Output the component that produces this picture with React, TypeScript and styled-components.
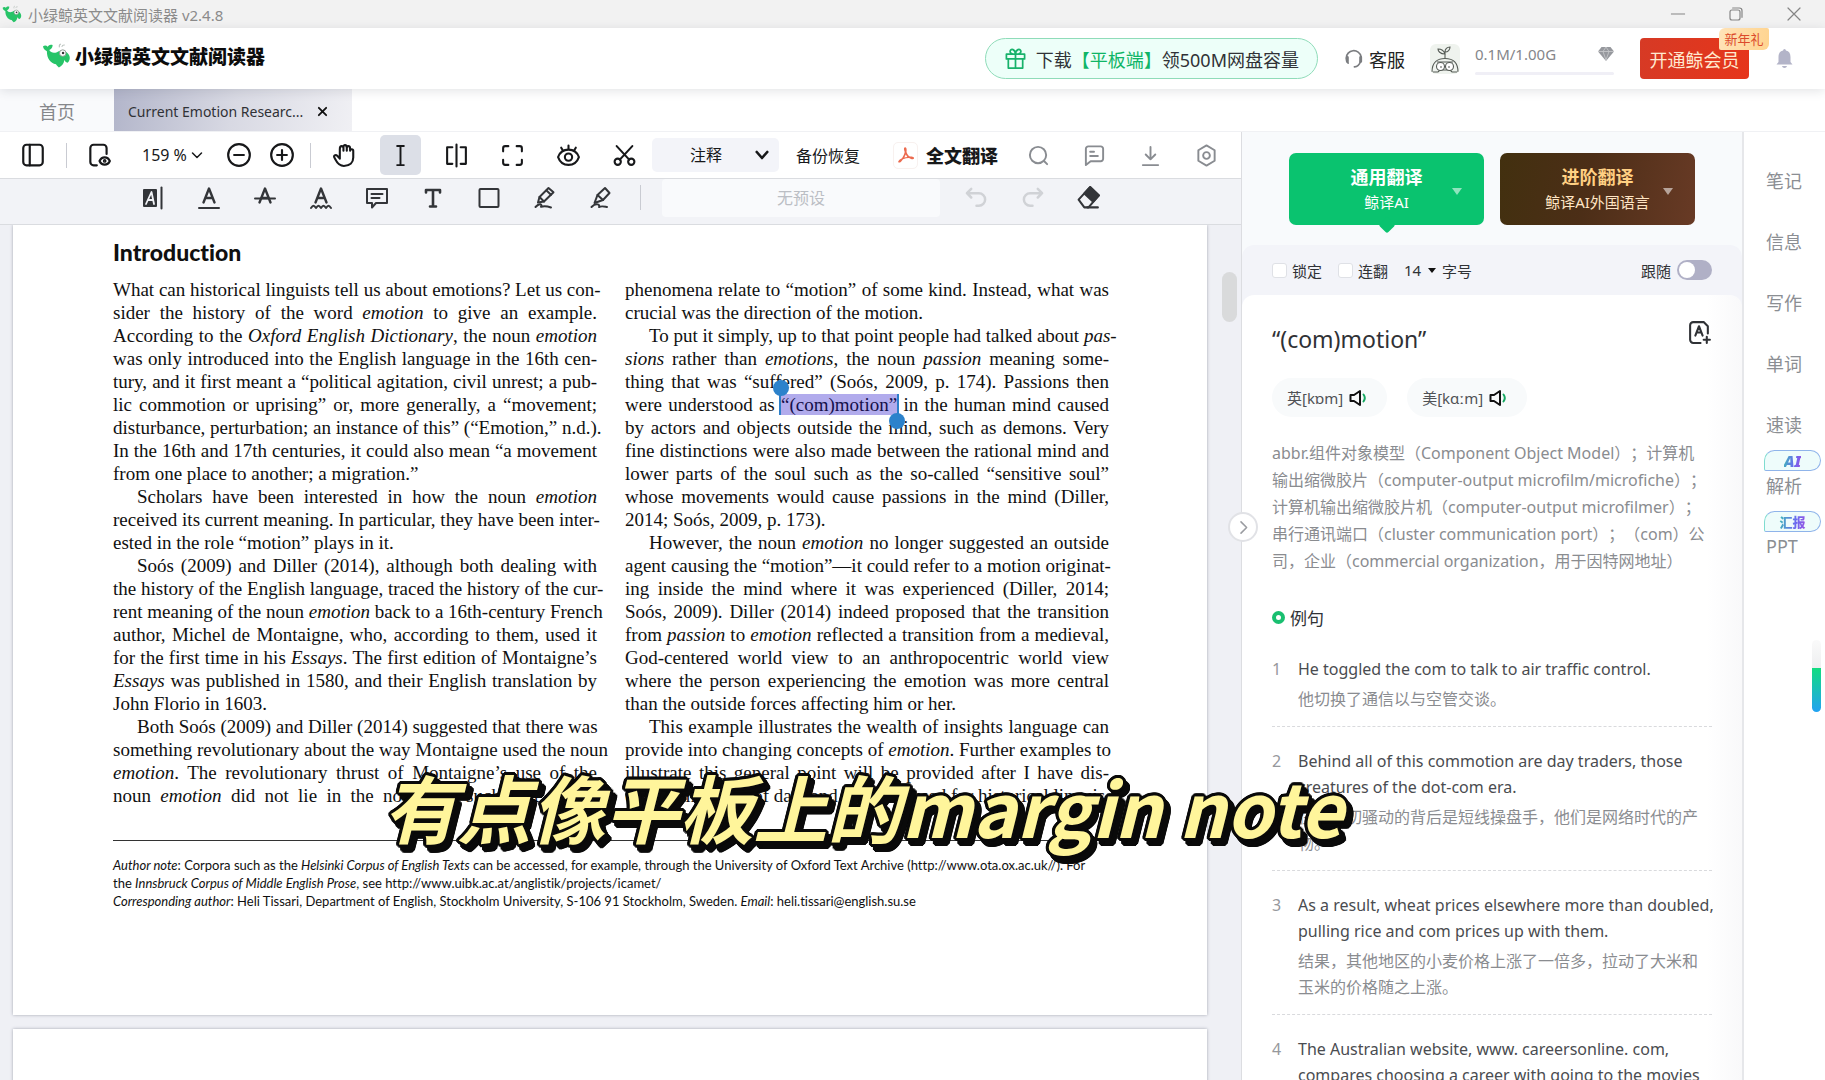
import React, { useState } from "react";
import styled, { createGlobalStyle, css } from "styled-components";

const ui = `"Noto Sans", "Noto Sans CJK SC", sans-serif`;

const GlobalStyle = createGlobalStyle`
  *, *::before, *::after { box-sizing: border-box; }
  html, body { margin: 0; padding: 0; }
  body { font-family: ${ui}; color: #303236; background: #fff; overflow: hidden; text-spacing-trim: space-all; }
  button, input, select { font: inherit; color: inherit; margin: 0; }
  button { border: 0; padding: 0; background: none; cursor: pointer; }
  p, h1, h2, h3, ol, ul { margin: 0; padding: 0; font-weight: inherit; }
  ol, ul { list-style: none; }
  svg { display: block; flex: none; }
`;

/* ---------- icons ---------- */

type IconProps = { size?: number; w?: number; color?: string; children: React.ReactNode };
const Icon = ({ size = 26, w = 2, color = "currentColor", children }: IconProps) => (
  <svg width={size} height={size} viewBox="0 0 24 24" fill="none" stroke={color} strokeWidth={w} strokeLinecap="round" strokeLinejoin="round" aria-hidden="true">
    {children}
  </svg>
);

const Whale = ({ width, height }: { width: number; height: number }) => (
  <svg width={width} height={height} viewBox="0 0 30 26" aria-hidden="true">
    <path d="M1 3.500C2.500 2 4.500 2.200 5.800 3.800 7 1.800 9 1.200 11 2.200 10.800 5.200 9.500 6.500 7.500 7.300 9 10 12 11 15.500 9.500 18.500 7.500 22.500 7 25.500 9.500 29.500 12.500 30 17.500 26.500 20.500 24.500 20 23.500 19 23 17.500 23 21 21 24 17.500 25.500 16 24 15 23 14.500 22 8.500 21 5 16 5 8.500 2.800 7.800 1.200 6 1 3.500Z" fill="#27c468" />
    <circle cx="21.500" cy="10.500" r="3.400" fill="#fff" stroke="#8f9a94" strokeWidth="1" />
    <circle cx="21.800" cy="10.500" r="1.300" fill="#333" />
    <path d="M18 4.500C17.500 2.500 18 1.500 19.500 1M20.500 4C21 2.500 22 2 23.500 2.200" stroke="#b9c1bd" strokeWidth="1.100" fill="none" />
  </svg>
);

const LetterA = () => <path d="M6.500 16.500 12 2.500l5.500 14M8.400 12h7.200" strokeWidth="2.400" />;

const icons = {
  sidebar: <><rect x="3" y="2.500" width="18" height="19" rx="3" /><path d="M9 2.500v19" /></>,
  pageEye: <><path d="M10 21.500H7a3 3 0 0 1-3-3v-13a3 3 0 0 1 3-3h9a3 3 0 0 1 3 3V11" /><path d="M12.500 17.500c2-4.500 7.500-4.500 9.500 0-2 4.500-7.500 4.500-9.500 0Z" /><circle cx="17.250" cy="17.500" r=".7" /></>,
  minus: <><circle cx="12" cy="12" r="10" /><path d="M7.500 12h9" /></>,
  plus: <><circle cx="12" cy="12" r="10" /><path d="M7.500 12h9M12 7.500v9" /></>,
  hand: <path d="M7.500 15 5 12.200c-1.600-1.600-3.800.2-2.600 2 1.800 3 3 7.800 9 7.800 6 0 9-3.500 9-8V7.500c0-2-3-2-3 0 0-3.500 0-4.500-1.600-4.500S14.200 4 14.200 5c0-2-.2-3-1.700-3S11 3 11 5c0-1.300-.3-2-1.700-2S7.500 4 7.500 6v9M17.400 7.500V6M14.200 5v2.500M11 5v2.500" />,
  ibeam: <path d="M8.500 2h7M12 2v20M8.500 22h7" />,
  split: <path d="M12 1.500v21M8 4H3v16h5M16 4h5v16h-5" />,
  expand: <path d="M3 8V5a2 2 0 0 1 2-2h3M16 3h3a2 2 0 0 1 2 2v3M21 16v3a2 2 0 0 1-2 2h-3M8 21H5a2 2 0 0 1-2-2v-3" />,
  eye: <><path d="M2 13.500c3.500-9.500 16.500-9.500 20 0-3.500 10-16.500 10-20 0Z" /><circle cx="12" cy="13.500" r="3.500" /><path d="M12 5.500V2.500M6.500 7 5 4.500M17.500 7 19 4.500" /></>,
  scissors: <><circle cx="5.500" cy="18" r="3" /><circle cx="18.500" cy="18" r="3" /><path d="M4.500 3 16.500 16M19.500 3 7.500 16" /></>,
  search: <><circle cx="11.500" cy="11.500" r="8.500" /><path d="m18 18 3 3" /></>,
  comment: <><path d="M3 22V5a2.500 2.500 0 0 1 2.500-2.500h13A2.500 2.500 0 0 1 21 5v10.500a2.500 2.500 0 0 1-2.500 2.500H8Z" /><path d="M7.500 8h4M7.500 12.500h8" /></>,
  download: <path d="M12 3v13M7 11l5 5 5-5M4 22h16" />,
  hex: <><path d="M12 1.500 20.500 6.500v11L12 22.500 3.500 17.500v-11Z" /><circle cx="12" cy="12" r="3.500" /></>,
  highlight: <><rect x="2" y="3" width="14" height="18" rx="1" fill="currentColor" stroke="none" /><path d="M5 18 10.500 6l2.500 12M7 14h5" stroke="#f2f3f7" strokeWidth="1.800" /><path d="M20.500 1.500v21" /></>,
  underline: <><LetterA /><path d="M2 22h20" /></>,
  strike: <><LetterA /><path d="M2 12.500h20" /></>,
  wavy: <><LetterA /><path d="M2 22c2-3 3-3 5 0 2-3 3-3 5 0 2-3 3-3 5 0 2-3 3-3 5 0" /></>,
  note: <><path d="M2 3h20v14H11l-4 4.500V17H2Z" /><path d="M6.500 8h11M6.500 12h8" /></>,
  text: <path d="M5 6.500V4h14v2.500M12 4v16M9 20.500h6" strokeWidth="2.600" />,
  square: <rect x="2.500" y="3" width="19" height="18" rx="1" />,
  pen: <><path d="m5 16.500 1.500-5.500L15.500 2l5 4.200L11 15.500Z" /><path d="m13.500 4.500 4.500 4.200M6.500 11l4.500 4.500M2.500 21c4-4.500 7-3 5.500-.2C10 20 14 20 18 21.500" /></>,
  marker: <><path d="m5.500 17 3-8L16 2l4.500 5L14 14Z" /><path d="m8.500 9 5.500 5M2.500 21c5-5 9-2 7.500 0 3-1.500 7 0 8 0" /></>,
  undo: <path d="M6.500 3 2 7.500 6.500 12M3 7.500h11.500a6.500 6.500 0 0 1 0 13H12" strokeWidth="2.600" />,
  redo: <path d="M17.500 3 22 7.500 17.500 12M21 7.500H9.500a6.500 6.500 0 0 0 0 13H12" strokeWidth="2.600" />,
  eraser: <><path d="m2.500 14 11-12 8.500 8-10 11.500H8Z" /><path d="m13.500 2 8.500 8-5.500 6L8 8.200Z" fill="currentColor" /><path d="M11 21.500h10" /></>,
};

/* ---------- window frame and header ---------- */

const Shell = styled.div`display: flex; flex-direction: column; height: 100vh; min-width: 1500px; overflow: hidden; position: relative;`;

const TitleBar = styled.div`
  display: flex; align-items: center; flex: none; height: 28px; padding: 0 23px 0 2px;
  background: #f2f2f2; color: #8b8b8b; font-size: 15px; gap: 6px;
`;
const WindowButtons = styled.div`display: flex; margin-left: auto; gap: 42px; color: #858585;`;

const Header = styled.header`
  display: flex; align-items: center; flex: none; height: 61px; padding: 0 32px 0 42px;
  background: #fff; box-shadow: 0 2px 10px rgba(60, 64, 80, 0.14); position: relative; z-index: 2;
`;
const Brand = styled.h1`display: flex; align-items: center; gap: 4px; margin-right: auto; padding-bottom: 6px; font-size: 19px; font-weight: 900; color: #0c0c0c;`;
const Promo = styled.button`
  display: flex; align-items: center; gap: 9px; height: 41px; padding: 0 18px; margin-right: 26px;
  border: 1px solid #8fdcb9; border-radius: 21px; background: #edfff9; font-size: 18px; color: #303236; white-space: nowrap;
  em { font-style: normal; color: #10b566; }
`;
const Service = styled.a`
  display: flex; align-items: center; gap: 5px; margin-right: 25px; font-size: 18px; color: #222; text-decoration: none;
  svg { color: #7b7d80; }
`;
const Avatar = styled.div`width: 30px; height: 30px; margin-right: 15px; border-radius: 6px; background: #eff3ee; overflow: hidden;`;
const Storage = styled.div`width: 139px; margin-right: 26px; color: #85868a; font-size: 15px;`;
const StorageTop = styled.div`display: flex; align-items: center; justify-content: space-between; height: 24px;`;
const Meter = styled.div`height: 3px; margin-top: 6px; border-radius: 2px; background: #f0eff6;`;
const Vip = styled.button`
  position: relative; width: 109px; height: 41px; margin-right: 27px; border-radius: 4px;
  background: linear-gradient(100deg, #d63a25, #e6351b); color: #ffe9d0; font-size: 18px; white-space: nowrap;
`;
const VipBadge = styled.span`
  position: absolute; right: -20px; top: -10px; width: 50px; height: 22px; line-height: 22px; font-size: 13px;
  border-radius: 6px 2px 6px 2px; background: linear-gradient(100deg, #ffe3b8, #ffd48f); color: #dc4a2b;
`;

const Tabs = styled.nav`display: flex; flex: none; height: 43px; border-bottom: 1px solid #f0f1f4; background: #fff;`;
const HomeTab = styled.button`width: 114px; padding-top: 2px; background: #f9fafc; color: #85878b; font-size: 18px;`;
const DocTab = styled.div`
  display: flex; align-items: center; gap: 14px; width: 238px; padding: 3px 0 0 14px;
  background: linear-gradient(100deg, #b2b5ca, #d8d9e3 50%, #f0f0f4); font-size: 14px; white-space: nowrap;
`;

/* ---------- reader ---------- */

const Body = styled.div`display: flex; flex: 1; min-height: 0;`;
const Reader = styled.main`display: flex; flex-direction: column; flex: 1; min-width: 0; position: relative;`;
const Toolbar = styled.div<{ $tone?: "grey" }>`
  display: flex; align-items: center; flex: none; border-bottom: 1px solid #dadce0;
  ${(p) => p.$tone === "grey"
    ? css`height: 46px; padding: 0 0 8px 125px; background: #f2f3f7; color: #333539;`
    : css`height: 47px; padding-left: 5px; background: #fff; color: #17181a;`}
`;
const Tool = styled.button<{ $w?: number; $muted?: boolean; $faint?: boolean }>`
  display: grid; place-items: center; flex: none; width: ${(p) => p.$w ?? 56}px; height: 40px;
  ${(p) => p.$muted && css`color: #898c91;`}
  ${(p) => p.$faint && css`color: #d0d2d6;`}
`;
const Pressed = styled.span`display: grid; place-items: center; width: 41px; height: 40px; border-radius: 5px; background: #dcdfe7;`;
const Divider = styled.i<{ $l?: number; $r?: number }>`flex: none; width: 1px; height: 25px; margin: 0 ${(p) => p.$r ?? 5}px 0 ${(p) => p.$l ?? 5}px; background: #c9cbd2;`;
const Picker = styled.label<{ $box?: boolean }>`
  display: flex; align-items: center; flex: none;
  select { appearance: none; border: 0; background: none; outline: 0; padding: 0; }
  ${(p) => p.$box
    ? css`width: 127px; height: 34px; padding: 0 8px 0 38px; border-radius: 5px; background: #f3f4f9; font-size: 16px; justify-content: space-between;`
    : css`width: 61px; margin: 0 14px 0 15px; font-size: 16px; justify-content: space-between;`}
`;
const TextButton = styled.button<{ $bold?: boolean }>`
  display: flex; align-items: center; flex: none; gap: 8px; white-space: nowrap; font-size: 16px;
  ${(p) => p.$bold ? css`margin: 0 12px 0 33px; font-size: 18px; font-weight: 900;` : css`margin-left: 17px;`}
`;
const PdfBadge = styled.span`display: grid; place-items: center; width: 25px; height: 27px; border-radius: 5px; border: 1px solid #f8f1ef;`;
const Preset = styled.input`
  width: 278px; height: 38px; margin-right: 8px; border: 0; border-radius: 4px; background: #f9fafc;
  text-align: center; font-size: 16px; &::placeholder { color: #bbbec4; opacity: 1; }
`;

const Canvas = styled.div`display: flex; flex: 1; min-height: 0; background: #eff0f5; padding-left: 13px; overflow: hidden;`;
const Pages = styled.div`display: flex; flex-direction: column; gap: 14px; flex: 1; min-width: 0;`;
const Page = styled.article`
  flex: none; min-height: 200px; padding: 12px 98px 105px 100px; background: #fff;
  box-shadow: 0 0 3px rgba(70, 75, 95, 0.45); color: #101010;
`;
const Track = styled.div`width: 34px; padding: 47px 4px 0 15px;`;
const Thumb = styled.div`height: 50px; border-radius: 8px; background: #d9dadb;`;
const SectionTitle = styled.h2`height: 30px; margin-bottom: 11px; font: 900 23px/30px Lato, sans-serif; font-variant-ligatures: none;`;
const Columns = styled.div`display: grid; grid-template-columns: repeat(2, minmax(0, 1fr)); gap: 28px; font: 19px/23px "Liberation Serif", serif;`;
const Line = styled.span<{ $last?: boolean }>`
  display: block; white-space: nowrap; text-align: justify; text-align-last: ${(p) => (p.$last ? "left" : "justify")};
`;
const Para = styled.p<{ $indent?: boolean }>`${(p) => p.$indent && css`& > span:first-child { padding-left: 24px; }`}`;
const Footnote = styled.footer`margin-top: 33px; padding-top: 15px; border-top: 1px solid #333; font: 13px/18px Lato, sans-serif; font-variant-ligatures: none; white-space: nowrap;`;

const Selection = styled.mark`
  position: relative; display: inline-block; height: 21px; line-height: 21px; background: #b1abec; color: #15104a; box-shadow: -2px 0 0 #2d7fc9, 2px 0 0 #2d7fc9;
  &::before, &::after { content: ""; position: absolute; width: 16px; height: 16px; border-radius: 50%; background: #2c82cb; }
  &::before { left: -8px; top: -14px; }
  &::after { right: -8px; bottom: -14px; }
`;
const Collapse = styled.button`
  position: absolute; right: -17px; top: 380px; z-index: 3; display: grid; place-items: center;
  width: 30px; height: 30px; border-radius: 50%; border: 2px solid #e1e2e6; background: #fff; color: #9a9ca1;
`;

/* ---------- translation panel ---------- */

const Panel = styled.aside`
  display: flex; flex-direction: column; flex: none; width: 503px; background: #f8fafc;
  border-left: 1px solid #dcdde1; border-right: 2px solid #e6e7ea;
`;
const Engines = styled.div`display: flex; gap: 16px; flex: none; height: 113px; padding: 21px 47px 0;`;
const Engine = styled.button<{ $gold?: boolean }>`
  position: relative; width: 195px; height: 72px; border-radius: 7px; text-align: center; font-size: 15px; line-height: 24px;
  background: ${(p) => (p.$gold ? "linear-gradient(100deg, #42300f, #4c2e17 45%, #683a25)" : "#0ac36f")};
  color: ${(p) => (p.$gold ? "#ffe5c4" : "#fff")};
  strong { display: block; font-size: 18px; line-height: 26px; font-weight: 700; color: ${(p) => (p.$gold ? "#ffd083" : "#fff")}; }
  ${(p) => !p.$gold && css`&::before { content: ""; position: absolute; left: 50%; bottom: -6px; width: 12px; height: 12px; margin-left: -6px; background: #0ac36f; transform: rotate(45deg); border-radius: 2px; }`}
`;
const EngineArrow = styled.i`position: absolute; right: 22px; top: 35px; border: 5px solid transparent; border-top: 7px solid rgba(255, 255, 255, 0.55); border-bottom: 0;`;
const Options = styled.div`
  display: flex; align-items: center; flex: none; height: 62px; margin-bottom: -12px; padding: 0 30px 12px; border-radius: 12px 12px 0 0;
  background: #f3f4f9; font-size: 15px;
`;
const Check = styled.label`
  display: flex; align-items: center; gap: 5px; margin-right: 16px;
  input { appearance: none; width: 15px; height: 15px; border: 1px solid #dfe1e6; border-radius: 3px; background: #fff; }
`;
const SizePick = styled.label`
  display: flex; align-items: center; gap: 6px;
  select { appearance: none; border: 0; background: none; outline: 0; padding: 0; width: 18px; }
  i { border: 4px solid transparent; border-top: 5px solid #111; border-bottom: 0; }
`;
const Follow = styled.label`
  display: flex; align-items: center; gap: 6px; margin-left: auto;
  input { appearance: none; width: 35px; height: 20px; padding: 2px; border-radius: 10px; background: #b0b0c6; }
  input::before { content: ""; display: block; width: 16px; height: 16px; border-radius: 50%; background: #fff; }
`;
const Sheet = styled.section`
  flex: 1; min-height: 0; padding: 25px 30px 0; border-radius: 12px 12px 0 0; overflow: hidden;
  background: linear-gradient(90deg, #fff 93%, #f9f9fa);
`;
const WordRow = styled.div`display: flex; justify-content: space-between; align-items: flex-start; height: 58px;`;
const Word = styled.h2`font-size: 23px; line-height: 38px; color: #2f3135;`;
const Chips = styled.div`display: flex; gap: 20px;`;
const Chip = styled.button`display: flex; align-items: center; gap: 6px; height: 39px; padding: 0 18px 0 15px; border-radius: 20px; background: #f8fafb; font-size: 15px; color: #505256;`;
const Definition = styled.p`margin-top: 23px; font-size: 16px; line-height: 27px; color: #8a8c90; white-space: nowrap; span { display: block; }`;
const Subhead = styled.h3`
  display: flex; align-items: center; gap: 5px; height: 36px; margin-top: 24px; font-size: 17px;
  &::before { content: ""; width: 13px; height: 13px; border-radius: 50%; border: 4px solid #19bf70; }
`;
const Example = styled.li`
  display: grid; grid-template-columns: 26px 1fr; padding: 21px 0 14px; border-bottom: 1px dashed #d9dadd; font-size: 16px; line-height: 26px; color: #4a4c50; white-space: nowrap;
  & > span { color: #96989c; }
  p { white-space: pre; }
  p + p { margin-top: 4px; color: #8a8c90; }
`;

const Rail = styled.nav`flex: none; width: 81px; padding-top: 17px; background: #fff; position: relative;`;
const RailLink = styled.a`
  position: relative; display: flex; align-items: center; height: 61px; padding-left: 22px; font-size: 18px; color: #8b8e93; text-decoration: none;
`;
const RailBadge = styled.span<{ $small?: boolean }>`
  position: absolute; left: 20px; top: -4px; width: 57px; height: 21px; border: 1px solid #8fb4ea; border-left-color: #7fdcd0; border-radius: 11px 11px 11px 2px;
  background: #eefcfb; display: grid; place-items: center; line-height: 18px;
  b { background: linear-gradient(100deg, #3bbcb4, #6a6cf0 60%, #9b4fe0); background-clip: text; color: transparent; font-weight: 900; font-size: ${(p) => (p.$small ? 13 : 16)}px; font-style: ${(p) => (p.$small ? "normal" : "italic")}; }
`;
const RailScroll = styled.div`position: absolute; right: 4px; bottom: 368px; width: 9px; height: 72px; background: linear-gradient(#fafafa, #eeeff0 28px, #12dc80 28px, #22a2f2); border-radius: 5px;`;

const ring = Array.from({ length: 16 }, (_, i) => {
  const a = (i / 16) * Math.PI * 2;
  return `${Math.round(Math.cos(a) * 3)}px ${Math.round(Math.sin(a) * 3)}px 0 #0a0a0a`;
});
const drop = Array.from({ length: 16 }, (_, i) => {
  const a = (i / 16) * Math.PI * 2;
  return `${Math.round(Math.cos(a) * 3) + 4}px ${Math.round(Math.sin(a) * 3) + 5}px 0 #0a0a0a`;
});
const Caption = styled.div`
  position: absolute; z-index: 5; left: 21%; top: 751px; white-space: nowrap; pointer-events: none;
  font: italic 700 74px/110px "Noto Sans CJK SC", sans-serif; color: #fff59b;
  text-shadow: ${[...ring, ...drop].join(", ")};
`;

/* ---------- content ---------- */

const left: string[][] = [
  ["What can historical linguists tell us about emotions? Let us con-", "sider the history of the word *emotion* to give an example.", "According to the *Oxford English Dictionary*, the noun *emotion*", "was only introduced into the English language in the 16th cen-", "tury, and it first meant a “political agitation, civil unrest; a pub-", "lic commotion or uprising” or, more generally, a “movement;", "disturbance, perturbation; an instance of this” (“Emotion,” n.d.).", "In the 16th and 17th centuries, it could also mean “a movement", "from one place to another; a migration.”"],
  ["Scholars have been interested in how the noun *emotion*", "received its current meaning. In particular, they have been inter-", "ested in the role “motion” plays in it."],
  ["Soós (2009) and Diller (2014), although both dealing with", "the history of the English language, traced the history of the cur-", "rent meaning of the noun *emotion* back to a 16th-century French", "author, Michel de Montaigne, who, according to them, used it", "for the first time in his *Essays*. The first edition of Montaigne’s", "*Essays* was published in 1580, and their English translation by", "John Florio in 1603."],
  ["Both Soós (2009) and Diller (2014) suggested that there was", "something revolutionary about the way Montaigne used the noun", "*emotion*. The revolutionary thrust of Montaigne’s use of the", "noun *emotion* did not lie in the notion as such, but not in|"],
];
const right: string[][] = [
  ["phenomena relate to “motion” of some kind. Instead, what was", "crucial was the direction of the motion."],
  ["To put it simply, up to that point people had talked about *pas-*", "*sions* rather than *emotions*, the noun *passion* meaning some-", "thing that was “suffered” (Soós, 2009, p. 174). Passions then", "were understood as #“(com)motion”# in the human mind caused", "by actors and objects outside the mind, such as demons. Very", "fine distinctions were also made between the rational mind and", "lower parts of the soul such as the so-called “sensitive soul”", "whose movements would cause passions in the mind (Diller,", "2014; Soós, 2009, p. 173)."],
  ["However, the noun *emotion* no longer suggested an outside", "agent causing the “motion”—it could refer to a motion originat-", "ing inside the mind where it was experienced (Diller, 2014;", "Soós, 2009). Diller (2014) indeed proposed that the transition", "from *passion* to *emotion* reflected a transition from a medieval,", "God-centered world view to an anthropocentric world view", "where the person experiencing the emotion was more central", "than the outside forces affecting him or her."],
  ["This example illustrates the wealth of insights language can", "provide into changing concepts of *emotion*. Further examples to", "illustrate this general point will be provided after I have dis-", "cussed the types of data and methods used for historical linguis-|"],
];

const rich = (s: string) =>
  s.split(/(\*[^*]+\*|#[^#]+#)/).map((part, i) =>
    part[0] === "*" ? <em key={i}>{part.slice(1, -1)}</em> : part[0] === "#" ? <Selection key={i}>{part.slice(1, -1)}</Selection> : part
  );

const Column = ({ paras }: { paras: string[][] }) => (
  <div>
    {paras.map((lines, p) => (
      <Para key={p} $indent={p > 0}>
        {lines.map((l, i) => (
          <Line key={i} $last={i === lines.length - 1 && !l.endsWith("|")}>{rich(l.replace("|", ""))}</Line>
        ))}
      </Para>
    ))}
  </div>
);

const examples = [
  ["He toggled the com to talk to air traffic control.", "他切换了通信以与空管交谈。"],
  ["Behind all of this commotion are day traders, those\ncreatures of the dot-com era.", "在这一切骚动的背后是短线操盘手，他们是网络时代的产\n物。"],
  ["As a result, wheat prices elsewhere more than doubled,\npulling rice and com prices up with them.", "结果，其他地区的小麦价格上涨了一倍多，拉动了大米和\n玉米的价格随之上涨。"],
  ["The Australian website, www. careersonline. com,\ncompares choosing a career with going to the movies", ""],
];

const definition = [
  "abbr.组件对象模型（Component Object Model）；计算机",
  "输出缩微胶片（computer-output microfilm/microfiche）；",
  "计算机输出缩微胶片机（computer-output microfilmer）；",
  "串行通讯端口（cluster communication port）；（com）公",
  "司，企业（commercial organization，用于因特网地址）",
];

const Speaker = () => (
  <svg width="20" height="18" viewBox="0 0 20 18" fill="none" strokeWidth="2" aria-hidden="true">
    <path d="M1.500 6H5l6-4v14l-6-4H1.500Z" stroke="#111" strokeLinejoin="round" />
    <path d="M14.500 5.500c1.500 2 1.500 5 0 7" stroke="#17a862" strokeLinecap="round" />
  </svg>
);

const mainTools: [string, keyof typeof icons][] = [["双页", "split"], ["全屏", "expand"], ["护眼", "eye"], ["截图", "scissors"]];
const sideTools: [string, keyof typeof icons][] = [["搜索", "search"], ["评论", "comment"], ["下载", "download"], ["设置", "hex"]];
const noteTools: [string, keyof typeof icons][] = [["高亮", "highlight"], ["下划线", "underline"], ["删除线", "strike"], ["波浪线", "wavy"], ["批注", "note"], ["文本", "text"], ["矩形", "square"], ["画笔", "pen"], ["荧光笔", "marker"]];

export default function App() {
  const [follow, setFollow] = useState(false);
  return (
    <Shell>
      <GlobalStyle />
      <TitleBar>
        <Whale width={20} height={18} />
        <span>小绿鲸英文文献阅读器 v2.4.8</span>
        <WindowButtons>
          <button aria-label="最小化"><Icon size={16} w={1.500}><path d="M2 12h20" /></Icon></button>
          <button aria-label="还原"><Icon size={16} w={1.800}><rect x="3" y="6" width="15" height="15" rx="3" /><path d="M7 3h10a4 4 0 0 1 4 4v10" /></Icon></button>
          <button aria-label="关闭"><Icon size={16} w={1.800}><path d="m3 3 18 18M21 3 3 21" /></Icon></button>
        </WindowButtons>
      </TitleBar>

      <Header>
        <Brand><Whale width={29} height={25} />小绿鲸英文文献阅读器</Brand>
        <Promo>
          <Icon size={23} w={1.800} color="#18b26b"><path d="M2.500 7.500h19v5h-19ZM4.500 12.500h15V22h-15ZM12 7.500V22M12 7.500C7 7.500 6 5.500 6.500 4c.8-2.500 5-2 5.500 3.500C12.500 2 16.700 1.500 17.500 4c.5 1.500-.5 3.500-5.500 3.500" /></Icon>
          <span>下载<em>【平板端】</em>领500M网盘容量</span>
        </Promo>
        <Service href="#service">
          <Icon size={20} w={2}><path d="M5 17a9 9 0 1 1 14.500-1.500C18.500 19 16 21 12.500 21.500" /><path d="M4 10v5M20 10v5" strokeWidth="3.500" /></Icon>客服
        </Service>
        <Avatar>
          <svg width="30" height="30" viewBox="0 0 30 30" fill="none" stroke="#555b55" strokeWidth="1.100">
            <path d="M15 14V8M15 10C10 10 8 7 8 5c4 0 6 2 7 5ZM15 8c0-3 2-5 5-5 0 3-2 5-5 5Z" />
            <path d="M2 28C2 18 8 14.500 15 14.500S28 18 28 28M7 18h16M3 28h5l2-2h10l2 2h5" />
            <circle cx="10.500" cy="22.500" r="4" fill="#fff" /><circle cx="19.500" cy="22.500" r="4" fill="#fff" /><path d="M10 23h2M18 23h2" />
          </svg>
        </Avatar>
        <Storage>
          <StorageTop><span>0.1M/1.00G</span>
            <svg width="16" height="14" viewBox="0 0 16 14" fill="#96989d"><path d="M3.500 0h9L16 4.500 8 14 0 4.500Z" /><path d="M0 4.500h16M5 4.500 8 13l3-8.500L8 0Z" stroke="#c9cacd" strokeWidth=".8" fill="none" /></svg>
          </StorageTop>
          <Meter />
        </Storage>
        <Vip>开通鲸会员<VipBadge>新年礼</VipBadge></Vip>
        <button aria-label="通知"><svg width="17" height="20" viewBox="0 0 17 20" fill="#b3b4c8"><path d="M8.500 0a1.500 1.500 0 0 1 1.400 1.600C13 2.200 14.500 4.500 14.500 8v5l2 2.500H.5l2-2.500V8c0-3.500 1.500-5.800 4.600-6.400A1.500 1.500 0 0 1 8.500 0ZM6 17h5c-.5 2.600-4.500 2.600-5 0Z" /></svg></button>
      </Header>

      <Tabs>
        <HomeTab>首页</HomeTab>
        <DocTab>
          <span>Current Emotion Researc...</span>
          <button aria-label="关闭标签"><Icon size={11} w={4} color="#111"><path d="m4 4 16 16M20 4 4 20" /></Icon></button>
        </DocTab>
      </Tabs>

      <Body>
        <Reader>
          <Toolbar>
            <Tool aria-label="侧栏"><Icon>{icons.sidebar}</Icon></Tool>
            <Divider $r={4} />
            <Tool aria-label="阅读视图"><Icon>{icons.pageEye}</Icon></Tool>
            <Picker>
              <select aria-label="缩放" defaultValue="159"><option value="159">159 %</option></select>
              <Icon size={12} w={3}><path d="m3 8 9 9 9-9" /></Icon>
            </Picker>
            <Tool $w={43} aria-label="缩小"><Icon>{icons.minus}</Icon></Tool>
            <Tool $w={43} aria-label="放大"><Icon>{icons.plus}</Icon></Tool>
            <Divider $l={7} />
            <Tool aria-label="抓手"><Icon size={25}>{icons.hand}</Icon></Tool>
            <Tool aria-label="选择文本"><Pressed><Icon size={23}>{icons.ibeam}</Icon></Pressed></Tool>
            {mainTools.map(([label, k]) => <Tool key={k} aria-label={label}><Icon size={25}>{icons[k]}</Icon></Tool>)}
            <Picker $box>
              <select aria-label="工具" defaultValue="note"><option value="note">注释</option></select>
              <Icon size={18} w={3.500}><path d="m5 8 7 8 7-8" /></Icon>
            </Picker>
            <TextButton>备份恢复</TextButton>
            <TextButton $bold>
              <PdfBadge>
                <svg width="18" height="18" viewBox="0 0 18 18" fill="#ec6b4f" aria-hidden="true"><path fillRule="evenodd" d="M7.500 1.500c2-1 2.500 1.500 2 4.500 1 2.500 2 4 3.500 4.500 2.500 0 4.500.5 4 2-.5 1.300-2.500 1-5-.5-2 0-4 .5-6 1.200C4.500 15.500 3 17 1.500 16.500.5 15.500 2.500 13.500 5 12.300 6.500 9.800 7.300 8 7.700 6 7 4 6.500 2.200 7.500 1.500Zm1.300 7-1.500 3 3-.6Z" /></svg>
              </PdfBadge>全文翻译
            </TextButton>
            {sideTools.map(([label, k]) => <Tool key={k} $muted aria-label={label}><Icon size={23}>{icons[k]}</Icon></Tool>)}
          </Toolbar>
          <Toolbar $tone="grey">
            {noteTools.map(([label, k]) => <Tool key={k} aria-label={label}><Icon size={24}>{icons[k]}</Icon></Tool>)}
            <Divider $l={11} $r={21} />
            <Preset placeholder="无预设" aria-label="预设" />
            <Tool $faint aria-label="撤销"><Icon size={23}>{icons.undo}</Icon></Tool>
            <Tool $faint aria-label="重做"><Icon size={23}>{icons.redo}</Icon></Tool>
            <Tool aria-label="橡皮擦"><Icon size={25}>{icons.eraser}</Icon></Tool>
          </Toolbar>

          <Canvas>
            <Pages>
              <Page>
                <SectionTitle>Introduction</SectionTitle>
                <Columns>
                  <Column paras={left} />
                  <Column paras={right} />
                </Columns>
                <Footnote>
                  <p><em>Author note</em>: Corpora such as the <em>Helsinki Corpus of English Texts</em> can be accessed, for example, through the University of Oxford Text Archive (http://www.ota.ox.ac.uk//). For</p>
                  <p>the <em>Innsbruck Corpus of Middle English Prose</em>, see http://www.uibk.ac.at/anglistik/projects/icamet/</p>
                  <p><em>Corresponding author</em>: Heli Tissari, Department of English, Stockholm University, S-106 91 Stockholm, Sweden. <em>Email</em>: heli.tissari@english.su.se</p>
                </Footnote>
              </Page>
              <Page />
            </Pages>
            <Track><Thumb /></Track>
          </Canvas>
          <Collapse aria-label="收起面板"><Icon size={15} w={2.500}><path d="m8 3 9 9-9 9" /></Icon></Collapse>
        </Reader>

        <Panel>
          <Engines>
            <Engine><strong>通用翻译</strong>鲸译AI<EngineArrow /></Engine>
            <Engine $gold><strong>进阶翻译</strong>鲸译AI外国语言<EngineArrow /></Engine>
          </Engines>
          <Options>
            <Check><input type="checkbox" />锁定</Check>
            <Check><input type="checkbox" />连翻</Check>
            <SizePick><select aria-label="字号" defaultValue="14"><option>14</option></select><i />字号</SizePick>
            <Follow>跟随<input type="checkbox" role="switch" checked={follow} onChange={(e) => setFollow(e.target.checked)} /></Follow>
          </Options>
          <Sheet>
            <WordRow>
              <Word>“(com)motion”</Word>
              <button aria-label="加入生词本">
                <Icon size={25} w={2}><path d="M13 22H6a3 3 0 0 1-3-3V5a3 3 0 0 1 3-3h10l4 4v7M19 16v6M16 19h6" /><path d="m8 15 3.500-9 3.500 9M9.500 12h4" /></Icon>
              </button>
            </WordRow>
            <Chips>
              <Chip><span>英[kɒm]</span><Speaker /></Chip>
              <Chip><span>美[kɑːm]</span><Speaker /></Chip>
            </Chips>
            <Definition>{definition.map((d) => <span key={d}>{d}</span>)}</Definition>
            <Subhead>例句</Subhead>
            <ol>
              {examples.map(([en, zh], i) => (
                <Example key={en}><span>{i + 1}</span><div><p>{en}</p>{zh && <p>{zh}</p>}</div></Example>
              ))}
            </ol>
          </Sheet>
        </Panel>

        <Rail>
          <RailLink href="#notes">笔记</RailLink>
          <RailLink href="#info">信息</RailLink>
          <RailLink href="#write">写作</RailLink>
          <RailLink href="#words">单词</RailLink>
          <RailLink href="#skim">速读</RailLink>
          <RailLink href="#analysis"><RailBadge><b>AI</b></RailBadge>解析</RailLink>
          <RailLink href="#ppt"><RailBadge $small><b>汇报</b></RailBadge>PPT</RailLink>
          <RailScroll />
        </Rail>
      </Body>

      <Caption>有点像平板上的margin note</Caption>
    </Shell>
  );
}
